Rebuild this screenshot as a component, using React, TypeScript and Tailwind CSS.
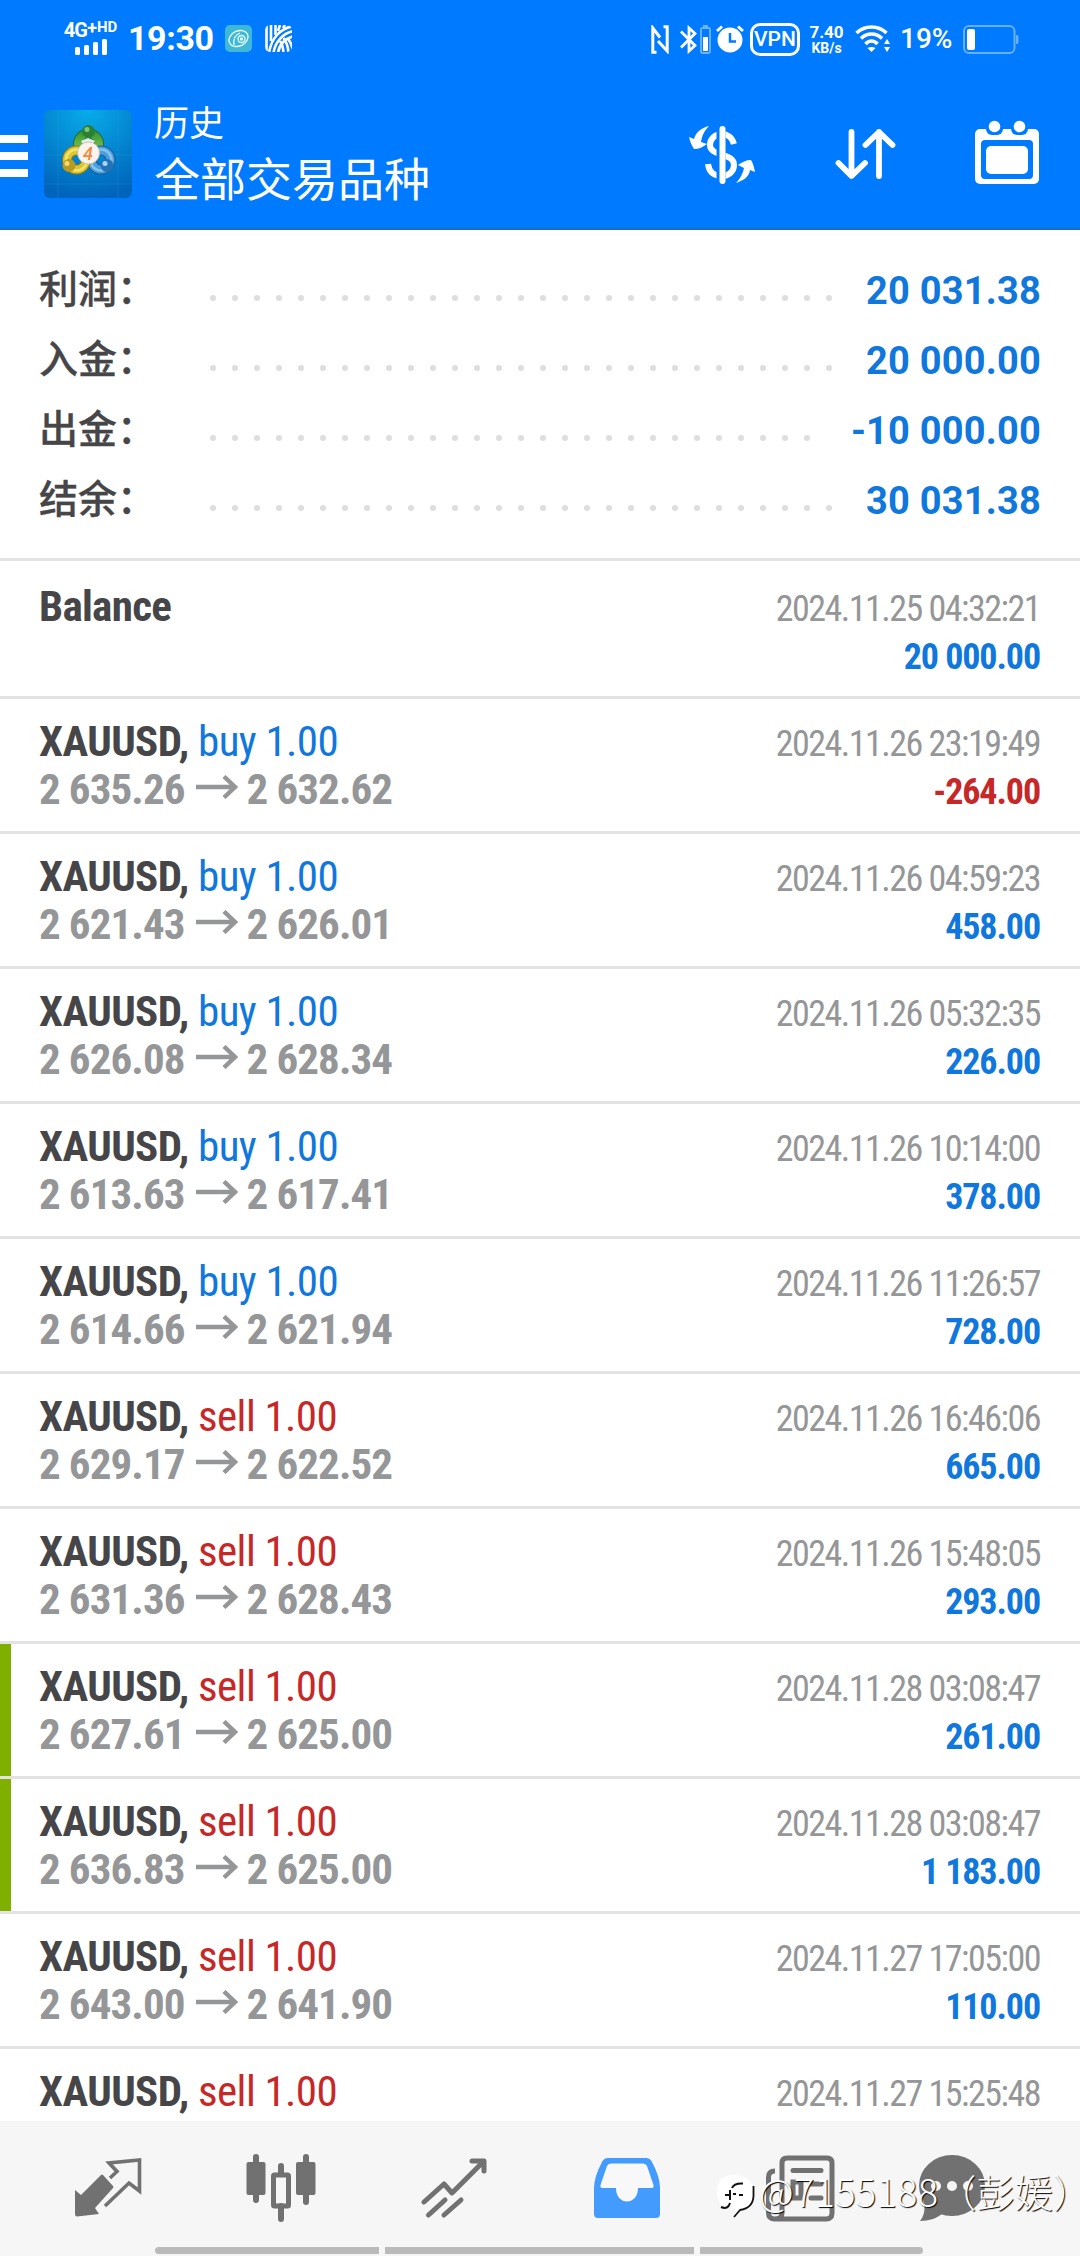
import React from 'react';

const summary = [
  { label: '利润：', value: '20 031.38', dots: 29 },
  { label: '入金：', value: '20 000.00', dots: 29 },
  { label: '出金：', value: '-10 000.00', dots: 28 },
  { label: '结余：', value: '30 031.38', dots: 29 },
];

const deals = [
  { side: 'buy', open: '2 635.26', close: '2 632.62', time: '2024.11.26 23:19:49', profit: '-264.00' },
  { side: 'buy', open: '2 621.43', close: '2 626.01', time: '2024.11.26 04:59:23', profit: '458.00' },
  { side: 'buy', open: '2 626.08', close: '2 628.34', time: '2024.11.26 05:32:35', profit: '226.00' },
  { side: 'buy', open: '2 613.63', close: '2 617.41', time: '2024.11.26 10:14:00', profit: '378.00' },
  { side: 'buy', open: '2 614.66', close: '2 621.94', time: '2024.11.26 11:26:57', profit: '728.00' },
  { side: 'sell', open: '2 629.17', close: '2 622.52', time: '2024.11.26 16:46:06', profit: '665.00' },
  { side: 'sell', open: '2 631.36', close: '2 628.43', time: '2024.11.26 15:48:05', profit: '293.00' },
  { side: 'sell', open: '2 627.61', close: '2 625.00', time: '2024.11.28 03:08:47', profit: '261.00', marked: true },
  { side: 'sell', open: '2 636.83', close: '2 625.00', time: '2024.11.28 03:08:47', profit: '1 183.00', marked: true },
  { side: 'sell', open: '2 643.00', close: '2 641.90', time: '2024.11.27 17:05:00', profit: '110.00' },
  { side: 'sell', open: '', close: '', time: '2024.11.27 15:25:48', profit: '' },
];

function StatusBar() {
  return (
    <div className="flex h-[78px] items-center justify-between pl-[64px] pr-[61px] text-white">
      <div className="flex items-center">
        <div className="flex w-[53px] flex-col items-center">
          <div className="flex h-[16px] items-start whitespace-nowrap font-bold leading-none">
            <span className="text-[20px] leading-[14px] tracking-[-0.8px]">4G</span>
            <span className="text-[18px] leading-[9px]">+</span>
            <span className="text-[15px] leading-[9px]">HD</span>
          </div>
          <svg width="32" height="16" viewBox="0 0 32 16" fill="currentColor">
            <rect x="0" y="8" width="5" height="8" rx="1.5" />
            <rect x="9" y="6" width="5" height="10" rx="1.5" />
            <rect x="18" y="3" width="5" height="13" rx="1.5" />
            <rect x="27" y="0" width="5" height="16" rx="1.5" />
          </svg>
        </div>
        <span className="ml-[11px] mt-[-2px] w-[85px] whitespace-nowrap text-[34px] font-bold leading-none tracking-[-0.4px]">19:30</span>
        <svg className="ml-[12px] mt-[-2px]" width="27" height="27" viewBox="0 0 27 27" fill="none">
          <rect width="27" height="27" rx="5" fill="#3fb8d8" />
          <g stroke="#e9ffff" strokeWidth="1.3">
            <ellipse cx="13.500" cy="13.500" rx="10" ry="7.500" transform="rotate(-25 13.5 13.5)" />
            <circle cx="16.500" cy="14" r="3.500" />
            <circle cx="16.500" cy="14" r="1" />
            <path d="M9 20C8 14 10 10 15 8" />
          </g>
        </svg>
        <svg className="ml-[13px] mt-[-2px]" width="27" height="27" viewBox="0 0 27 27" fill="none" stroke="#fff" strokeWidth="2.6">
          <clipPath id="tile">
            <rect width="27" height="27" rx="5" />
          </clipPath>
          <g clipPath="url(#tile)">
            <path d="M1.500 0V27M6 0V16M10.500 0V10" />
            <path d="M4 28C6 14 15 3 29 1" />
            <path d="M8.500 28C10 17 18 8 29 6" />
            <path d="M13 28C14 20 20 13 29 11" />
            <path d="M15 0L13 6M20 0L18 3" />
            <path d="M15 16Q18 20 18.500 28M18.500 13Q23 19 23.500 28M22.500 13Q27 19 28 25" />
          </g>
        </svg>
      </div>
      <div className="flex items-center">
        <svg width="18" height="29" viewBox="0 0 18 29" fill="none" stroke="currentColor" strokeWidth="3">
          <path d="M5.500 27.300H1.800V3L9 12.500" />
          <path d="M12.500 1.700H16.200V26L7 16" />
        </svg>
        <svg className="ml-[11px]" width="17" height="29" viewBox="0 0 17 29" fill="none" stroke="currentColor" strokeWidth="2.8">
          <path d="M1 6.500L15 20.500L9 26V3L15 8.500L1 22.500" />
        </svg>
        <svg className="ml-[3px]" width="11" height="29" viewBox="0 0 11 29" fill="none">
          <rect x="3" y="0" width="5" height="3" fill="#6db5ff" />
          <rect x="1" y="3" width="9" height="25" rx="1.500" stroke="#6db5ff" strokeWidth="1.800" />
          <rect x="3" y="12" width="5" height="14" fill="#fff" />
        </svg>
        <svg className="ml-[5px]" width="28" height="28" viewBox="0 0 28 28" fill="none">
          <circle cx="14" cy="15" r="12.500" fill="#fff" />
          <path d="M1 6L6 1.500M27 6L22 1.500" stroke="#fff" strokeWidth="3" />
          <path d="M14 8V16.500H20" stroke="#007aff" strokeWidth="2.500" />
        </svg>
        <span className="ml-[6px] flex h-[33px] w-[50px] items-center justify-center rounded-[10px] border-[3px] border-white text-[21px] font-medium leading-none">
          VPN
        </span>
        <span className="ml-[9px] flex w-[35px] flex-col items-center font-bold">
          <span className="text-[17px] leading-[17px]">7.40</span>
          <span className="text-[14px] leading-[14px]">KB/s</span>
        </span>
        <svg className="ml-[11px]" width="36" height="28" viewBox="0 0 36 28" fill="none" stroke="#fff" strokeWidth="3.600">
          <path d="M1.500 8C10 0 23 0 31.500 8" />
          <path d="M6 13.500C12 7.500 21 7.500 27 13.500" />
          <path d="M10.500 19C14 15 19 15 22.500 19" />
          <path d="M12.500 23L16.500 27L20.500 23C18 21.500 15 21.500 12.500 23Z" fill="#fff" stroke="none" />
          <path d="M32 14L35 19H29ZM32 27L35 22H29Z" fill="#fff" stroke="none" />
        </svg>
        <span className="ml-[9px] w-[53px] whitespace-nowrap text-[28px] font-medium leading-none">19%</span>
        <svg className="ml-[10px]" width="56" height="29" viewBox="0 0 56 29" fill="none">
          <rect x="1" y="1" width="50.500" height="27" rx="5" stroke="#66b0ff" strokeWidth="2" />
          <rect x="4" y="4" width="8" height="21" rx="2" fill="#fff" />
          <path d="M53 10H54Q55.500 10 55.500 12V17Q55.500 19 54 19H53Z" fill="#66b0ff" />
        </svg>
      </div>
    </div>
  );
}

function AppLogo() {
  return (
    <svg className="ml-[16px] mt-[32px] shrink-0" width="88" height="88" viewBox="0 0 88 88">
      <defs>
        <radialGradient id="tileBg" cx="0.500" cy="0" r="1">
          <stop offset="0" stopColor="#08ace9" />
          <stop offset="1" stopColor="#0064bb" />
        </radialGradient>
        <linearGradient id="green" x1="0" y1="0" x2="0" y2="1">
          <stop offset="0" stopColor="#3c9a35" />
          <stop offset="1" stopColor="#8fce5c" />
        </linearGradient>
      </defs>
      <rect width="88" height="88" rx="6" fill="url(#tileBg)" />
      <path d="M14 0V88M74 0V88M0 45H88M0 74H88" stroke="#35a8dc" strokeOpacity="0.200" />
      <g fill="none">
        <circle cx="44.500" cy="34" r="10.500" stroke="#216b35" strokeWidth="10" />
        <circle cx="44.500" cy="34" r="10.500" stroke="url(#green)" strokeWidth="8" />
        <circle cx="57" cy="50" r="9.500" stroke="#185b96" strokeWidth="10" />
        <circle cx="57" cy="50" r="9.500" stroke="#4c9fdd" strokeWidth="8" />
        <circle cx="57" cy="50" r="10.500" stroke="#84c3ee" strokeWidth="2.500" />
        <circle cx="32.500" cy="50" r="9.500" stroke="#8b7718" strokeWidth="10" />
        <circle cx="32.500" cy="50" r="9.500" stroke="#dcc431" strokeWidth="8" />
        <circle cx="32.500" cy="50" r="10.500" stroke="#f2e36b" strokeWidth="2.500" />
      </g>
      <path d="M37 31L44 28L51 31L48 36H40Z" fill="#e6efe6" />
      <circle cx="44.500" cy="21.500" r="6.500" fill="#2a8034" />
      <circle cx="43" cy="19.500" r="2.500" fill="#7cc878" />
      <circle cx="25" cy="55.500" r="6.500" fill="#b99a20" />
      <circle cx="23" cy="53.500" r="2.500" fill="#f0dc74" />
      <circle cx="63" cy="55.500" r="6.500" fill="#2672b5" />
      <circle cx="61" cy="53.500" r="2.500" fill="#a4d8f8" />
      <circle cx="44.500" cy="43" r="11" fill="#fbf4ee" stroke="#b9b7a4" strokeWidth="0.800" />
      <text x="44" y="49.500" textAnchor="middle" fill="#ef8b3c" fontSize="18" fontWeight="500" fontStyle="italic">4</text>
    </svg>
  );
}

function Header() {
  return (
    <div className="h-[230px] shrink-0 border-b-2 border-[#1c6cc4] bg-[#007aff]">
      <StatusBar />
      <div className="flex h-[150px] text-white">
        <div className="mt-[57px] flex w-[28px] flex-col gap-[9px]">
          <div className="h-[8px] bg-white" />
          <div className="h-[8px] bg-white" />
          <div className="h-[8px] bg-white" />
        </div>
        <AppLogo />
        <div className="ml-[22px] mt-[18px] flex-1 whitespace-nowrap font-['Noto_Sans_CJK_SC',sans-serif] font-normal">
          <div className="text-[35px] leading-[50px]">历史</div>
          <div className="text-[46px] leading-[60px]">全部交易品种</div>
        </div>
        <svg className="mt-[48px]" width="67" height="58" viewBox="0 0 67 58" fill="none">
          <g stroke="#fff" strokeWidth="6">
            <path d="M45 18C43 11 38 8 33 8C26 8 21 13 21 19C21 31 45 26 45 39C45 46 39 50 33 50C25 50 20 46 19 38" />
          </g>
          <path d="M32 0V58" stroke="#007aff" strokeWidth="9" />
          <path d="M33.500 3V55" stroke="#fff" strokeWidth="6" strokeLinecap="round" />
          <path d="M20 0C12 2 7 6 5 13L0 11C1 16 3 20 5 23C10 23 14 21 18 18L12 16C13 10 15 5 20 0Z" fill="#fff" />
          <path d="M47 57C56 54 60 50 61 44L66 46C65 41 64 37 62 34C57 34 53 36 49 39L55 42C54 47 51 53 47 57Z" fill="#fff" />
        </svg>
        <svg className="ml-[79px] mt-[50px]" width="61" height="52" viewBox="0 0 61 52" fill="none" stroke="#fff" strokeWidth="5.800" strokeLinecap="round" strokeLinejoin="round">
          <path d="M16.500 4V47M3.500 35L16.500 48L30 35" />
          <path d="M44 48V4M30.500 17L44 4L57.500 17" />
        </svg>
        <svg className="ml-[79px] mr-[41px] mt-[42px]" width="64" height="65" viewBox="0 0 64 65">
          <rect x="0" y="9" width="64" height="55" rx="5" fill="#fff" />
          <rect x="6" y="20" width="52" height="39" rx="4" fill="#007aff" />
          <rect x="11" y="26" width="42" height="28" rx="5" fill="#fff" />
          <rect x="11" y="-6" width="17" height="21" rx="6" fill="#007aff" />
          <rect x="36" y="-6" width="17" height="21" rx="6" fill="#007aff" />
          <circle cx="19.500" cy="6.500" r="5.800" fill="#fff" />
          <circle cx="44.500" cy="6.500" r="5.800" fill="#fff" />
        </svg>
      </div>
    </div>
  );
}

function Summary() {
  return (
    <div className="h-[331px] shrink-0 border-b-[3px] border-[#e3e3e3] pt-[25px]">
      {summary.map((row) => (
        <div key={row.label} className="flex h-[70px] items-center pl-[39px] pr-[39px]">
          <span className="mt-[-7px] w-[171px] whitespace-nowrap font-['Noto_Sans_CJK_SC',sans-serif] text-[39px] font-medium leading-none text-[#464648] [-webkit-text-stroke:0.3px_#464648]">
            {row.label}
          </span>
          <div className="flex flex-1 gap-[16px] pt-[15px]">
            {Array.from({ length: row.dots }, (_, i) => (
              <span key={i} className="size-[6px] rounded-full bg-[#dedede]" />
            ))}
          </div>
          <span className="mt-[2px] text-[38px] font-bold leading-none tracking-[0.2px] text-[#1077dc]">{row.value}</span>
        </div>
      ))}
    </div>
  );
}

function Arrow() {
  return (
    <svg className="ml-[11px] mr-[9px] mt-[-4px]" width="42" height="24" viewBox="0 0 42 24" fill="none" stroke="#949698" strokeWidth="4.400">
      <path d="M0 12H39M28 1.500L39 12L28 22.500" />
    </svg>
  );
}

function History() {
  return (
    <div className="min-h-0 flex-1 overflow-hidden font-['Roboto_Condensed',Roboto,sans-serif] [font-stretch:75%]">
      <div className="flex h-[138px] justify-between border-b-[3px] border-[#e3e3e3] pl-[39px] pr-[40px] pt-[20px]">
        <span className="text-[43px] font-bold leading-[50px] tracking-[-0.7px] text-[#464648]">Balance</span>
        <div className="text-right text-[36px]">
          <div className="leading-[56px] tracking-[-1.5px] text-[#949698]">2024.11.25 04:32:21</div>
          <div className="leading-[40px] font-bold tracking-[-1.1px] text-[#1077dc]">20 000.00</div>
        </div>
      </div>
      {deals.map((deal, index) => (
        <div
          key={index}
          className={`flex h-[135px] justify-between border-b-[3px] border-[#e3e3e3] pl-[39px] pr-[40px] pt-[17px] ${deal.marked ? 'bg-[linear-gradient(#7fb000,#7fb000)] bg-[length:11px_100%] bg-no-repeat' : ''}`}
        >
          <div className="whitespace-nowrap text-[43px]">
            <div className="leading-[50px] tracking-[-0.6px]">
              <span className="font-bold text-[#464648]">XAUUSD, </span>
              <span className={deal.side === 'buy' ? 'text-[#1077dc]' : 'text-[#c62828]'}>{deal.side} 1.00</span>
            </div>
            {deal.open && (
              <div className="flex items-center leading-[46px] font-bold tracking-[-0.9px] text-[#949698]">
                {deal.open}
                <Arrow />
                {deal.close}
              </div>
            )}
          </div>
          <div className="whitespace-nowrap text-right text-[36px]">
            <div className="leading-[56px] tracking-[-1.5px] text-[#949698]">{deal.time}</div>
            <div className={`leading-[40px] font-bold tracking-[-1.1px] ${deal.profit.startsWith('-') ? 'text-[#c62828]' : 'text-[#1077dc]'}`}>
              {deal.profit}
            </div>
          </div>
        </div>
      ))}
    </div>
  );
}

function BottomNav() {
  return (
    <div className="flex h-[135px] shrink-0 flex-col bg-[#f6f6f6] pt-[33px]">
      <div className="flex h-[68px] items-center pl-[21px] text-[#717171]">
        <div className="flex w-[173px] justify-center">
          <svg width="68" height="60" viewBox="0 0 68 60" fill="none">
            <path d="M36 20L43 13.500L35 5L65.500 2V33L55 25L31 48" stroke="currentColor" strokeWidth="3.600" />
            <path d="M27 17Q28 16 29 17L39 28Q40 29 39 30L21 50L25 56L3 58.500Q1 58.500 1 56V32L7 37Z" fill="currentColor" />
          </svg>
        </div>
        <div className="flex w-[173px] justify-center">
          <svg width="70" height="68" viewBox="0 0 70 68" fill="none">
            <path d="M10 3V46M35 12V20M35 52V65M60 3V48" stroke="currentColor" strokeWidth="6" strokeLinecap="round" />
            <rect x="0.500" y="8" width="19" height="33" rx="2" fill="currentColor" />
            <rect x="50" y="8" width="19.500" height="33" rx="2" fill="currentColor" />
            <rect x="27.500" y="21" width="15" height="31" rx="1" stroke="currentColor" strokeWidth="5" />
          </svg>
        </div>
        <div className="flex w-[173px] justify-center">
          <svg width="66" height="62" viewBox="0 0 66 62" fill="none" stroke="currentColor" strokeWidth="5" strokeLinecap="round" strokeLinejoin="round">
            <path d="M3 45L23 27L31 36L61 6M51 4H63V14" />
            <path d="M7.500 58L24 43M23 58L40 43" />
          </svg>
        </div>
        <div className="flex w-[173px] justify-center">
          <svg width="68" height="60" viewBox="0 0 68 60">
            <path d="M15 0H53Q57 0 59 4Q67 19 67 30V56Q67 60 63 60H5Q1 60 1 56V30Q1 19 9 4Q11 0 15 0Z" fill="#429bfd" />
            <path d="M18 5.500H50Q53 5.500 54 8L60.500 27Q61 30 59 30H45C45 48 23 48 23 30H9Q7 30 7.500 27L14 8Q15 5.500 18 5.500Z" fill="#f9f8f8" />
          </svg>
        </div>
        <div className="flex w-[173px] justify-center">
          <svg width="70" height="67" viewBox="0 0 70 67" fill="none" stroke="currentColor" strokeWidth="5">
            <path d="M10 16Q3.500 16 3.500 22V58Q3.500 64 10 64H61Q67 64 67 58V8Q67 3 62 3H22Q17 3 17 8V58Q17 64 10 64" />
            <path d="M28 15.500H56M46 29H56M46 43H56" strokeLinecap="round" />
            <rect x="28" y="27" width="8" height="16" />
          </svg>
        </div>
        <div className="flex w-[132px] justify-center">
          <svg width="66" height="67" viewBox="0 0 66 67">
            <ellipse cx="33" cy="30.500" rx="33" ry="30.500" fill="currentColor" />
            <path d="M4 45C7 54 5 61 1 66C10 66 19 63 24 58Z" fill="currentColor" />
            <circle cx="17" cy="31" r="5" fill="#f6f6f6" />
            <circle cx="33" cy="31" r="5" fill="#f6f6f6" />
            <circle cx="49" cy="31" r="5" fill="#f6f6f6" />
          </svg>
        </div>
      </div>
      <div className="mt-[25px] flex gap-[6px] pl-[155px]">
        <div className="h-[7px] w-[224px] rounded-l-full bg-[#bababa]" />
        <div className="h-[7px] w-[309px] bg-[#bababa]" />
        <div className="h-[7px] w-[223px] rounded-r-full bg-[#bababa]" />
      </div>
    </div>
  );
}

function Watermark() {
  return (
    <div className="absolute left-[716px] top-[2163px] flex items-center whitespace-nowrap text-white">
      <svg className="mt-[9px]" width="40" height="46" viewBox="0 0 40 46" fill="none">
        <path d="M18 3Q37 3 37 20Q37 36 25 37L18 44L19 37Q1 36 1 20Q1 3 18 3Z" fill="#fff" />
        <path d="M37.500 14V24Q37 36 24 38L18 45" stroke="#111" strokeWidth="1.800" />
        <path d="M5 35Q12 38 14 31M14 28V18M16 16Q18 11 27 11.500M9 23H13M17 22H20M23 23H27" stroke="#111" strokeWidth="2" />
      </svg>
      <span className="ml-[3px] font-['Noto_Sans_CJK_SC',sans-serif] text-[38px] font-light leading-[54px] tracking-[0.3px] [text-shadow:1px_1px_1px_#000]">
        @7155188（彭媛<span className="[font-feature-settings:'halt']">）</span>
      </span>
    </div>
  );
}

export default function App() {
  return (
    <div className="relative flex h-[2256px] w-[1080px] flex-col overflow-hidden bg-white font-[Roboto,'Noto_Sans_CJK_SC',sans-serif]">
      <Header />
      <Summary />
      <History />
      <BottomNav />
      <Watermark />
    </div>
  );
}
